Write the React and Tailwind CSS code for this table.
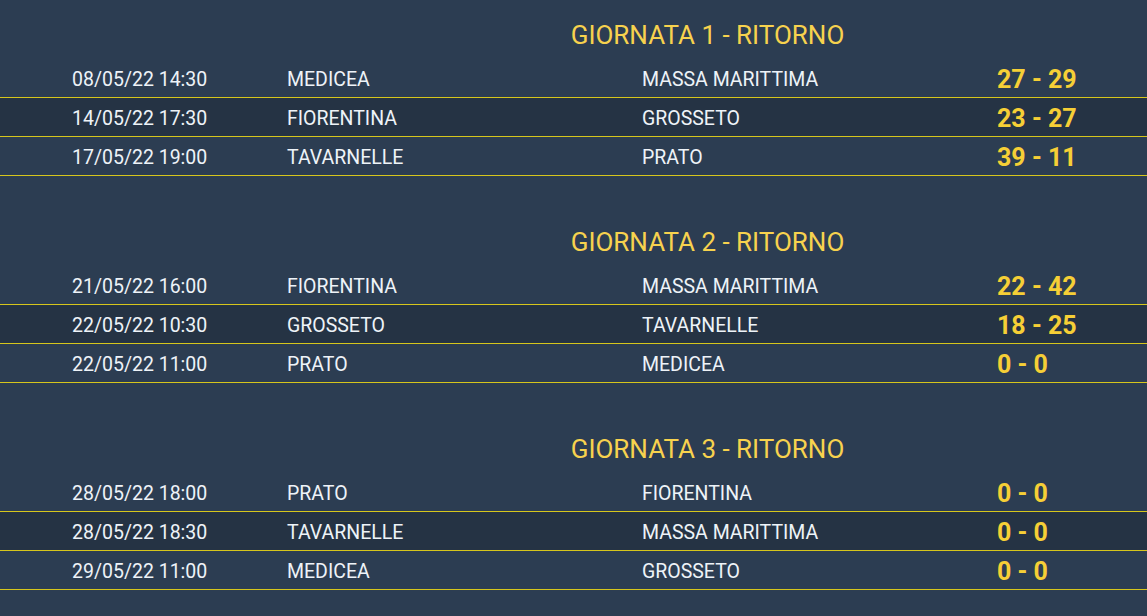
import React from 'react';

const rounds = [
  {
    title: 'GIORNATA 1 - RITORNO',
    matches: [
      { date: '08/05/22 14:30', home: 'MEDICEA', away: 'MASSA MARITTIMA', score: '27 - 29' },
      { date: '14/05/22 17:30', home: 'FIORENTINA', away: 'GROSSETO', score: '23 - 27' },
      { date: '17/05/22 19:00', home: 'TAVARNELLE', away: 'PRATO', score: '39 - 11' },
    ],
  },
  {
    title: 'GIORNATA 2 - RITORNO',
    matches: [
      { date: '21/05/22 16:00', home: 'FIORENTINA', away: 'MASSA MARITTIMA', score: '22 - 42' },
      { date: '22/05/22 10:30', home: 'GROSSETO', away: 'TAVARNELLE', score: '18 - 25' },
      { date: '22/05/22 11:00', home: 'PRATO', away: 'MEDICEA', score: '0 - 0' },
    ],
  },
  {
    title: 'GIORNATA 3 - RITORNO',
    matches: [
      { date: '28/05/22 18:00', home: 'PRATO', away: 'FIORENTINA', score: '0 - 0' },
      { date: '28/05/22 18:30', home: 'TAVARNELLE', away: 'MASSA MARITTIMA', score: '0 - 0' },
      { date: '29/05/22 11:00', home: 'MEDICEA', away: 'GROSSETO', score: '0 - 0' },
    ],
  },
];

const MatchRow = ({ match, odd }) => (
  <div
    className={`flex items-center h-[39px] border-b border-[#d6c61c] pl-[72px] text-[19.5px] text-[#eef3f8] ${
      odd ? 'bg-[#253344]' : ''
    }`}
  >
    <div className="w-[215px] pt-[3px]">{match.date}</div>
    <div className="w-[355px] pt-[3px]">{match.home}</div>
    <div className="w-[355px] pt-[3px]">{match.away}</div>
    <div className="pt-[2px] text-[25px] font-bold text-[#f6cf36] leading-none">{match.score}</div>
  </div>
);

export default function App() {
  return (
    <div
      className="min-h-screen bg-[#2c3d52]"
      style={{ fontFamily: 'Roboto, "Liberation Sans", sans-serif' }}
    >
      {rounds.map((round) => (
        <section key={round.title} className="pt-[19px] pb-[31px]">
          <h2 className="h-[32px] leading-[32px] mb-[8px] pl-[268px] text-center text-[26px] text-[#f7d24e]">
            {round.title}
          </h2>
          {round.matches.map((m, i) => (
            <MatchRow key={m.date + m.home} match={m} odd={i % 2 === 1} />
          ))}
        </section>
      ))}
    </div>
  );
}
